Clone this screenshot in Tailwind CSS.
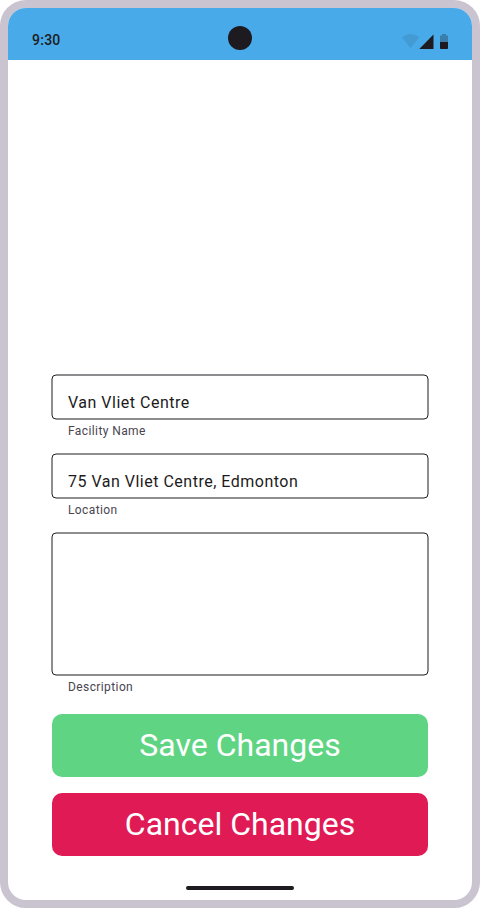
<!DOCTYPE html>
<html lang="en">
<head>
<meta charset="utf-8">
<title>Edit Facility</title>
<script src="https://cdn.jsdelivr.net/npm/@tailwindcss/browser@4"></script>
</head>
<body class="bg-white font-['Roboto',sans-serif]">
<div class="w-[480px] h-[908px] rounded-[26px] border-8 border-[#cac4d0] bg-white overflow-hidden flex flex-col text-[#1d1b20]">
  <header class="h-[52px] shrink-0 bg-[#48aae9] relative flex items-end justify-between px-6 pb-[10px]">
    <span class="text-sm leading-5 font-medium tracking-[0.25px]">9:30</span>
    <span class="absolute left-[220px] top-[18px] size-6 rounded-full bg-[#1d1b20]"></span>
    <svg class="w-[46px] h-[17px]" viewBox="0 0 46 17" fill="#1d1b20">
      <path opacity=".1" d="M8.5 15.2 0 4.2C2 2.3 5 1 8.5 1S15 2.3 17.2 4.2Z"/>
      <path d="M17.3 16H31.5V1.5Z"/>
      <path opacity=".3" d="M38 3.2q0-.7.7-.7H40V1h4v1.500h1.300q.7 0 .7.700V9h-8Z"/>
      <path d="M38 9h8v6.200q0 .8-.8.800h-6.400q-.8 0-.8-.800Z"/>
    </svg>
  </header>
  <main class="flex-1 flex flex-col px-11 pt-[315px]">
    <label class="flex flex-col h-[79px]">
      <span class="relative h-[44px] pl-4 pt-4 text-base leading-6 tracking-[0.5px]">
        <svg class="absolute inset-0 w-full h-full overflow-visible" fill="none" stroke="#1d1b20"><rect width="376" height="44" rx="4"/></svg>
        Van Vliet Centre
      </span>
      <span class="pl-4 pt-1 text-xs leading-4 tracking-[0.4px] text-[#49454f]">Facility Name</span>
    </label>
    <label class="flex flex-col h-[79px]">
      <span class="relative h-[44px] pl-4 pt-4 text-base leading-6 tracking-[0.5px]">
        <svg class="absolute inset-0 w-full h-full overflow-visible" fill="none" stroke="#1d1b20"><rect width="376" height="44" rx="4"/></svg>
        75 Van Vliet Centre, Edmonton
      </span>
      <span class="pl-4 pt-1 text-xs leading-4 tracking-[0.4px] text-[#49454f]">Location</span>
    </label>
    <label class="flex flex-col h-[181px]">
      <span class="relative h-[142px]">
        <svg class="absolute inset-0 w-full h-full overflow-visible" fill="none" stroke="#1d1b20"><rect width="376" height="142" rx="4"/></svg>
      </span>
      <span class="pl-4 pt-1 text-xs leading-4 tracking-[0.4px] text-[#49454f]">Description</span>
    </label>
    <button class="h-[63px] shrink-0 rounded-[10px] bg-[#5fd483] text-white text-[32px] leading-[63px]">Save Changes</button>
    <button class="mt-4 h-[63px] shrink-0 rounded-[10px] bg-[#e01a55] text-white text-[32px] leading-[63px]">Cancel Changes</button>
  </main>
  <div class="mb-[10px] mx-auto w-[108px] h-1 shrink-0 rounded-full bg-[#1d1b20]"></div>
</div>
</body>
</html>
